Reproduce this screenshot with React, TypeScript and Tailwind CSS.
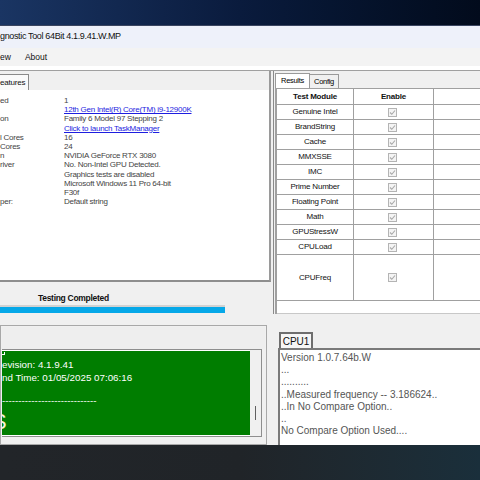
import React from "react";

const sans = { fontFamily: '"Liberation Sans", Arial, sans-serif' };

const infoRows: { label: string; value: string; link?: boolean }[] = [
  { label: "ed", value: "1" },
  { label: "", value: "12th Gen Intel(R) Core(TM) i9-12900K", link: true },
  { label: "on", value: "Family 6 Model 97 Stepping 2" },
  { label: "", value: "Click to launch TaskManager", link: true },
  { label: "l Cores", value: "16" },
  { label: "Cores", value: "24" },
  { label: "n", value: "NVIDIA GeForce RTX 3080" },
  { label: "river", value: "No. Non-Intel GPU Detected." },
  { label: "", value: "Graphics tests are disabled" },
  { label: "", value: "Microsoft Windows 11 Pro 64-bit" },
  { label: "", value: "F30f" },
  { label: "per:", value: "Default string" },
];

const modules = [
  "Genuine Intel",
  "BrandString",
  "Cache",
  "MMXSSE",
  "IMC",
  "Prime Number",
  "Floating Point",
  "Math",
  "GPUStressW",
  "CPULoad",
];

const logLines = [
  "Version 1.0.7.64b.W",
  "...",
  "..........",
  "..Measured frequency -- 3.186624..",
  "..In No Compare Option..",
  "..",
  "No Compare Option Used....",
];

// greyed out, checked checkbox
const Check = () => (
  <div className="w-[9px] h-[9px] border border-[#b4b4b4] bg-[#f4f4f4] flex items-center justify-center">
    <svg width="7" height="7" viewBox="0 0 7 7">
      <path d="M1 3.5 L2.8 5.3 L6 1.5" fill="none" stroke="#a8a8a8" strokeWidth="1.1" />
    </svg>
  </div>
);

export default function App() {
  return (
    <div className="w-[480px] h-[480px] overflow-hidden flex flex-col bg-[#f0f0f0]" style={sans}>
      {/* desktop */}
      <div className="h-[26px] shrink-0 bg-linear-to-r from-[#1a3563] via-[#0a1b3d] to-[#020b1c] border-b border-[#3a4560]" />

      {/* title bar */}
      <div className="h-[22px] shrink-0 bg-[#eef1fa] flex items-center text-[9px] tracking-[-0.35px] text-[#111]">
        gnostic Tool 64Bit 4.1.9.41.W.MP
      </div>

      {/* menu */}
      <div className="h-[18px] shrink-0 bg-[#f3f3f3] flex items-center text-[8.5px] text-[#111]">
        <span>ew</span>
        <span className="ml-[14px]">About</span>
      </div>
      <div className="h-[4px] shrink-0 bg-white" />

      {/* main */}
      <div className="h-[375px] shrink-0 flex border-t border-[#a0a0a0]">
        {/* left column */}
        <div className="w-[271px] shrink-0 flex flex-col">
          <div className="h-[211px] flex flex-col border-r-2 border-r-[#9a9a9a] border-b-2 border-b-[#8e8e8e]">
            <div className="h-[19px] flex items-end bg-[#f0f0f0]">
              <div className="h-[16px] w-[29px] bg-[#fafafa] border-r border-t border-[#8a8a8a] text-[8px] tracking-[-0.2px] flex items-center text-[#111]">
                eatures
              </div>
            </div>
            <div className="flex-1 bg-white pt-[6px] text-[8px] tracking-[-0.25px] leading-[9.2px] text-[#444]">
              {infoRows.map((r, i) => (
                <div key={i} className="flex h-[9.2px]">
                  <span className="w-[64px] shrink-0">{r.label}</span>
                  <span className={r.link ? "text-[#1e1ee0] underline" : ""}>{r.value}</span>
                </div>
              ))}
            </div>
          </div>

          {/* status */}
          <div className="h-[43px] flex flex-col">
            <div className="pl-[38px] pt-[11px] text-[8.5px] font-bold tracking-[-0.3px] text-[#111] leading-[10px]">
              Testing Completed
            </div>
            <div className="mt-[2px] w-[225px] h-[8px] border-t-2 border-[#d2d2d2] bg-[#06a8e8]" />
          </div>

          {/* result box */}
          <div className="h-[120px] w-[267px] border border-[#a8a8a8] flex flex-col p-[1px]">
            <div className="h-[22px] bg-[#eeeeee]" />
            <div className="flex-1 flex border border-[#8e8e8e] border-l-0 bg-white mb-[6px] mr-[3px]">
              <div className="w-[248px] h-[84px] mt-[1px] bg-[#007d00] overflow-hidden text-[9.8px] leading-[12.8px] text-white">
                <div className="-mt-[8px] h-[12.8px] flex items-end">
                  <div className="w-[3px] h-[3px] border-b border-r border-white mb-[1px]" />
                </div>
                <div className="mt-[3px]">evision: 4.1.9.41</div>
                <div>nd Time: 01/05/2025 07:06:16</div>
                <div>&nbsp;</div>
                <div className="-mt-[2px]">-----------------------------</div>
                <div className="mt-[3px] text-[22px] leading-[22px] -ml-[10px] text-[#f4f4dc]">S</div>
              </div>
              <div className="flex-1 bg-[#f0f0f0] relative">
                <div className="absolute left-[5px] top-[56px] w-[1px] h-[14px] bg-[#606060]" />
              </div>
            </div>
          </div>
        </div>

        {/* right column */}
        <div className="flex-1 flex flex-col pl-[2px] min-w-0">
          <div className="h-[243px] flex flex-col border-l border-[#8a8a8a]">
            <div className="h-[17px] flex items-end pl-[1px]">
              <div className="h-[15px] w-[35px] bg-white border border-b-0 border-[#9a9a9a] text-[7.5px] tracking-[-0.3px] flex items-center justify-center">
                Results
              </div>
              <div className="h-[14px] w-[29px] border-r border-t border-[#9a9a9a] text-[7.5px] tracking-[-0.3px] flex items-center justify-center">
                Config
              </div>
            </div>
            <div className="flex-1 flex flex-col border-l-2 border-[#a0a0a0] ml-[1px] bg-white">
              <div className="w-[260px] text-[8px] tracking-[-0.2px] text-[#111]">
                <div className="flex h-[17px] border-t border-b border-[#a0a0a0] font-bold">
                  <div className="w-[76px] flex items-center justify-center">Test Module</div>
                  <div className="w-[80px] border-l border-[#a0a0a0] flex items-center justify-center">Enable</div>
                  <div className="flex-1 border-l border-[#a0a0a0]" />
                </div>
                {modules.map((m) => (
                  <div key={m} className="flex h-[15px] border-b border-[#a0a0a0]">
                    <div className="w-[76px] flex items-center justify-center">{m}</div>
                    <div className="w-[80px] border-l border-[#a0a0a0] flex items-center justify-center pr-[2px]">
                      <Check />
                    </div>
                    <div className="flex-1 border-l border-[#a0a0a0]" />
                  </div>
                ))}
                <div className="flex h-[46px] border-b border-[#a0a0a0]">
                  <div className="w-[76px] flex items-center justify-center">CPUFreq</div>
                  <div className="w-[80px] border-l border-[#a0a0a0] flex items-center justify-center pr-[2px]">
                    <Check />
                  </div>
                  <div className="flex-1 border-l border-[#a0a0a0]" />
                </div>
              </div>
              <div className="flex-1 border-b border-[#c8c8c8]" />
            </div>
          </div>

          <div className="h-[14px]" />

          {/* log panel */}
          <div className="flex-1 flex flex-col pl-[3px]">
            <div className="h-[20px] flex items-end pl-[3px]">
              <div className="h-[16px] w-[34px] border-2 border-b-0 border-[#6e6e6e] bg-[#f6f6f6] text-[10px] flex items-center justify-center text-[#111]">
                CPU1
              </div>
            </div>
            <div className="flex-1 ml-[2px] bg-white border-l-2 border-t-2 border-[#7a7a7a] pt-[2px] pl-[1px] text-[10px] leading-[12.2px] text-[#555]">
              {logLines.map((l, i) => (
                <div key={i} className="whitespace-nowrap">
                  {l}
                </div>
              ))}
            </div>
          </div>
        </div>
      </div>

      {/* desktop taskbar */}
      <div className="flex-1 bg-linear-to-r from-[#222529] via-[#202428] to-[#1a2f3b]" />
    </div>
  );
}
